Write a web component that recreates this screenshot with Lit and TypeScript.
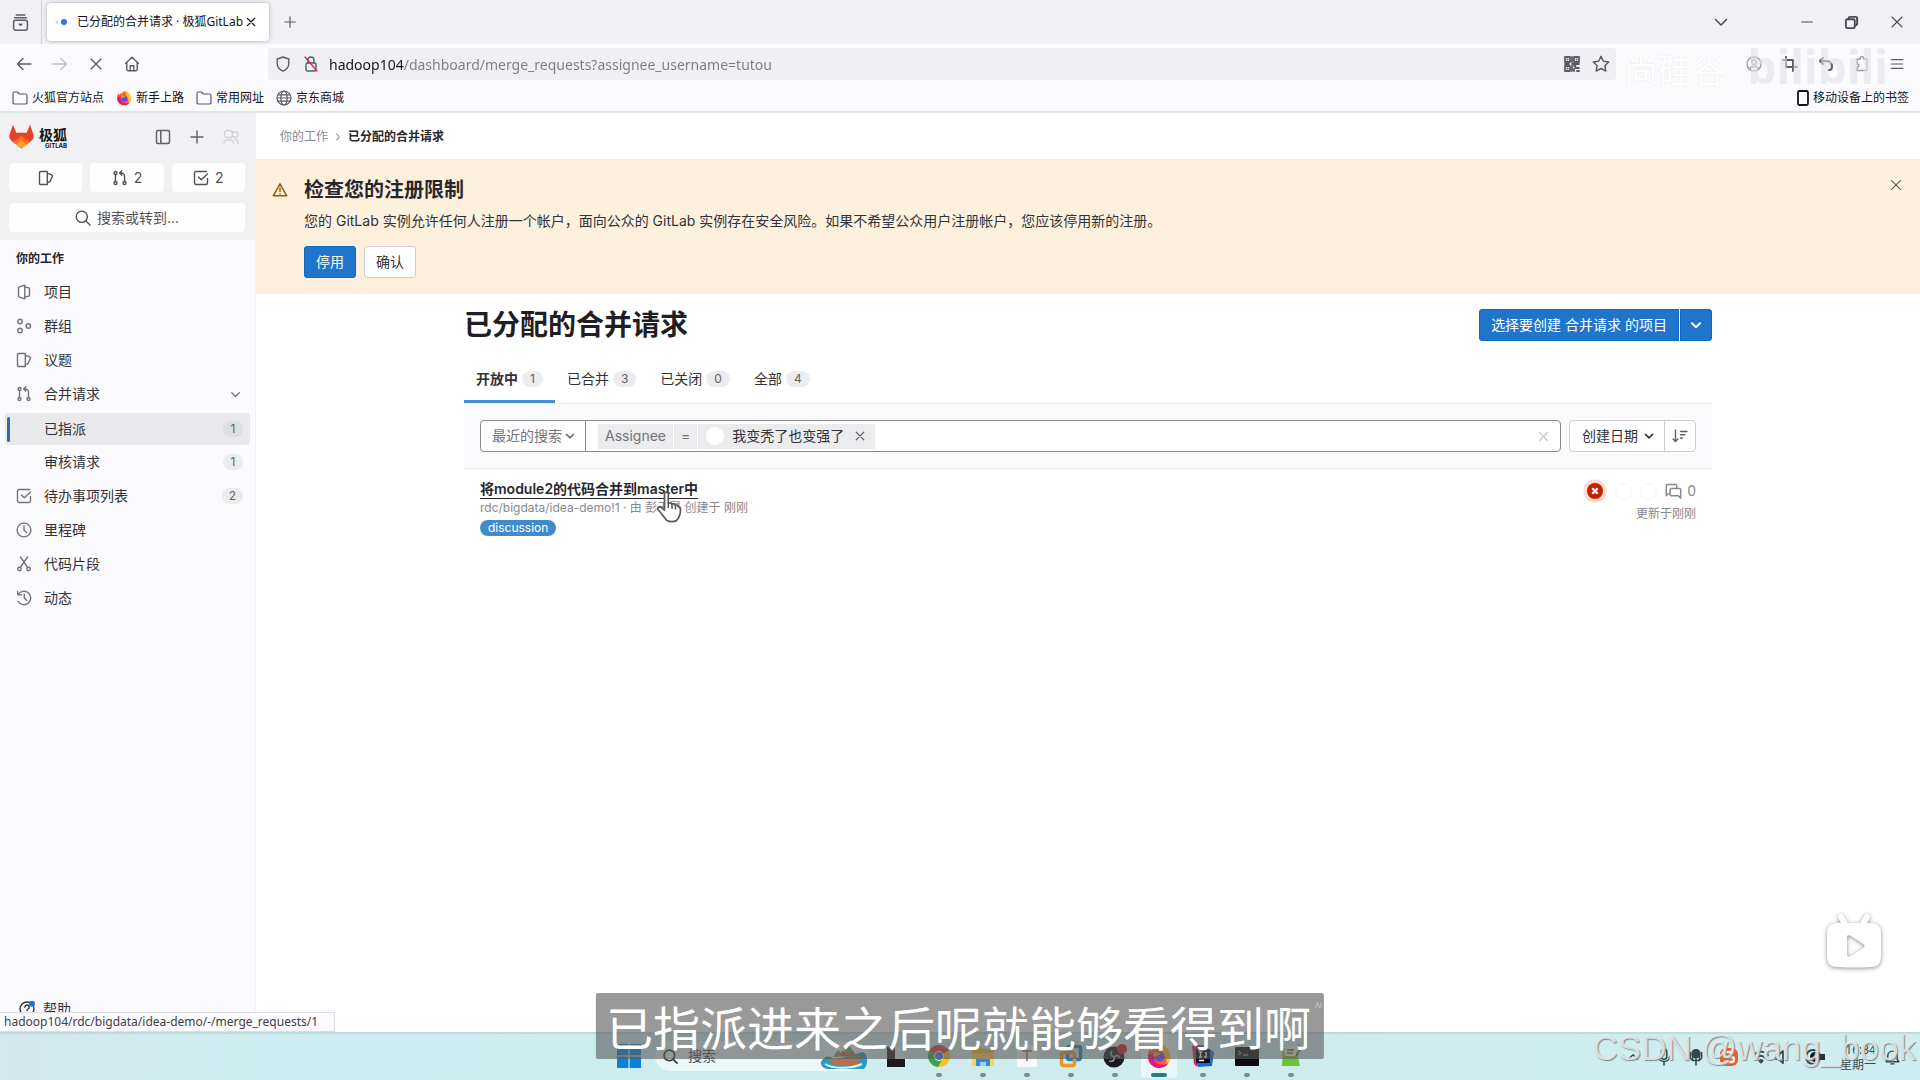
import { LitElement, html, svg, css, nothing } from "lit";
import { customElement } from "lit/decorators.js";
import { classMap } from "lit/directives/class-map.js";

const base = css`
  * { box-sizing: border-box; }
  :host { font-family: Inter, "Noto Sans CJK SC", sans-serif; font-size: 14px; line-height: 20px; color: #333238; }
  button, input, select { font: inherit; color: inherit; margin: 0; padding: 0; border: 0; background: none; outline: none; }
  button, a { display: inline-flex; align-items: center; justify-content: center; white-space: nowrap; }
  a { color: inherit; text-decoration: none; }
  ul { list-style: none; margin: 0; padding: 0; }
  h1, h2, p { margin: 0; }
  svg { display: block; flex: none; }
`;

const line = (body: unknown, size = 16, width = 1.4) => html`<svg width=${size} height=${size} viewBox="0 0 16 16" fill="none"
  stroke="currentColor" stroke-width=${width} stroke-linecap="round" stroke-linejoin="round" aria-hidden="true">${body}</svg>`;

const shapes = {
  close: svg`<path d="M3 3l10 10M13 3L3 13"/>`,
  plus: svg`<path d="M8 2v12M2 8h12"/>`,
  chevron: svg`<path d="M4 6.2l4 4 4-4"/>`,
  right: svg`<path d="M6 4l4 4-4 4"/>`,
  up: svg`<path d="M3.500 10.200L8 5.800l4.500 4.400"/>`,
  archive: svg`<path d="M4 1h8M2.500 3.500h11"/><rect x="1.500" y="5.800" width="13" height="9.400" rx="2"/><path d="M6.800 9.500L8 10.600l1.200-1.100"/>`,
  back: svg`<path d="M15 8H1.500M7 2.500L1.500 8 7 13.500"/>`,
  forward: svg`<path d="M1 8h13.500M9 2.500L14.500 8 9 13.500"/>`,
  home: svg`<path d="M1.500 7.500L8 1.200l6.500 6.300M2.800 6.500v7a1.300 1.300 0 0 0 1.300 1.300h7.800a1.300 1.300 0 0 0 1.300-1.300v-7M6.200 14.500V9.800h3.600v4.700"/>`,
  shield: svg`<path d="M8 1l5.800 2v4.500c0 3.600-2.400 6.200-5.800 7.700-3.400-1.500-5.800-4.100-5.800-7.700V3z"/>`,
  star: svg`<path d="M8 1.200l2.100 4.400 4.800.6-3.500 3.300.9 4.800L8 12l-4.300 2.300.9-4.800L1.100 6.200l4.800-.6z"/>`,
  menu: svg`<path d="M1.500 3h13M1.500 8h13M1.500 13h13"/>`,
  folder: svg`<path d="M1 12.500v-9A1.500 1.500 0 0 1 2.500 2h3L7.300 4h6.200A1.500 1.500 0 0 1 15 5.500v7a1.500 1.500 0 0 1-1.500 1.500h-11A1.500 1.500 0 0 1 1 12.500z"/>`,
  globe: svg`<circle cx="8" cy="8" r="7"/><ellipse cx="8" cy="8" rx="3.200" ry="7"/><path d="M1 8h14M2 4.800h12M2 11.200h12"/>`,
  phone: svg`<rect x="3" y="1" width="10" height="14" rx="1.500"/>`,
  account: svg`<circle cx="8" cy="8" r="7"/><circle cx="8" cy="6.200" r="2.300"/><path d="M4 12.500c1-3 7-3 8 0"/>`,
  crop: svg`<path d="M4 1v10h11M1 4h10v11"/>`,
  undo: svg`<path d="M5 2L2 5l3 3M2 5h6c4 0 6 2.500 6 5.500S12 14 11 14"/>`,
  puzzle: svg`<path d="M3 6V3h3.500a1.700 1.700 0 1 1 3 0H13v11.500H3V11c2.500.5 2.500-3.500 0-3z"/>`,
  panel: svg`<rect x="1.500" y="1.500" width="13" height="13" rx="1.500"/><path d="M5.800 1.500v13"/>`,
  issues: svg`<path d="M2.700 1.500h6.600v13H2.700a1.200 1.200 0 0 1-1.200-1.200V2.700a1.200 1.200 0 0 1 1.200-1.200zM9.300 3.200l4.400 1.600c.7.300 1 .9.700 1.600l-2.500 5.200-2.600 1.400"/>`,
  merge: svg`<circle cx="3.500" cy="3" r="1.500"/><circle cx="3.500" cy="13" r="1.500"/><circle cx="12.500" cy="13" r="1.500"/><path d="M3.500 4.500v7M12.500 11.500V6a3 3 0 0 0-3-3H8M9.800.8L7.600 3l2.200 2.200"/>`,
  todo: svg`<path d="M14.500 8.500v4.500a1.500 1.500 0 0 1-1.500 1.500H3A1.500 1.500 0 0 1 1.500 13V3A1.500 1.500 0 0 1 3 1.500h10.500M5.500 7l2.800 2.800L14.500 4"/>`,
  search: svg`<circle cx="6.800" cy="6.800" r="5.600"/><path d="M11 11l4 4"/>`,
  project: svg`<path d="M8.800 1.200v13.600l-5.600-1.600a1 1 0 0 1-.7-1V3.800a1 1 0 0 1 .7-1zM8.800 2.800l3.900 1.100a1 1 0 0 1 .8 1v6.200a1 1 0 0 1-.8 1l-3.900 1.100"/>`,
  group: svg`<circle cx="4" cy="3.500" r="2.200"/><circle cx="4" cy="12.500" r="2.200"/><circle cx="12.300" cy="8" r="2.200"/>`,
  clock: svg`<circle cx="8" cy="8" r="6.900"/><path d="M8 3.800V8l2.500 2.500"/>`,
  snippet: svg`<circle cx="3.500" cy="13" r="1.700"/><circle cx="12.500" cy="13" r="1.700"/><path d="M4.300 11.500L11.500 1M11.700 11.500L4.500 1"/>`,
  history: svg`<path d="M2 5a6.700 6.700 0 1 1 .2 6.300M1.500 1.500L2 5l3.500-.4M8.300 4.200V8l2.500 2.500"/>`,
  warning: svg`<path d="M8 1.800l6.700 12H1.300zM8 6.200v3.400M8 11.700v.2"/>`,
  sort: svg`<path d="M3.500 2v11.500M1 11l2.500 2.500L6 11M8.500 3.500h6.500M8.500 6.800h4.300M8.500 10h2"/>`,
  comments: svg`<path d="M4 10H3l-1.800 2V2.500A1.200 1.200 0 0 1 2.400 1.300h7.400A1.200 1.200 0 0 1 11 2.500V5M6 5.200h7.600a1.200 1.200 0 0 1 1.200 1.200v8L12.500 12H6a1.200 1.200 0 0 1-1.200-1.200V6.400A1.200 1.200 0 0 1 6 5.200z"/>`,
  qr: svg`<path d="M1 1h5v5H1zM10 1h5v5h-5zM1 10h5v5H1zM3.500 3.500h.1M12.500 3.500h.1M3.500 12.500h.1M8 1v5M8 8h7M1 8h4M10 10h1.500v2H15M10 15v-2M13 15h2M8 10v5"/>`,
  minimize: svg`<path d="M2 8h12"/>`,
  restore: svg`<rect x="2" y="4.500" width="9.500" height="9.500" rx="1.500"/><path d="M5 4.500V3.500A1.500 1.500 0 0 1 6.500 2h6A1.500 1.500 0 0 1 14 3.500v6a1.500 1.500 0 0 1-1.500 1.500h-1"/>`,
  faces: svg`<rect x="1.500" y="1.500" width="8" height="7" rx="2.500"/><path d="M1 14.500c.5-5 9-5 10 0M9.500 3h3.500c1.500 0 2 1 2 2.500S14 8 12.500 8h-3M12 10c1.500.5 3 2 3 4.500"/>`,
  lock: svg`<rect x="3" y="7" width="10" height="8" rx="1.500"/><path d="M5 7V4a3 3 0 0 1 6 0v3"/><path d="M2 1l12 14" stroke="#e22850"/>`,
  help: svg`<circle cx="8" cy="8" r="7"/><path d="M5.800 6.200a2.200 2.200 0 1 1 3.200 2c-.7.400-1 .7-1 1.400M8 11.700v.2"/><circle cx="13" cy="2.800" r="3" fill="#1f75cb" stroke="none"/>`,
  mic: svg`<rect x="5.500" y="1" width="5" height="9" rx="2.500"/><path d="M3 7.500c0 6 10 6 10 0M8 12v3"/>`,
  flower: svg`<circle cx="8" cy="5" r="3.500" fill="currentColor"/><path d="M3 4v5c1 3 9 3 10 0V4M8 9v6M5 6v5M11 6v5"/>`,
  wifi: svg`<path d="M1 6c4-4.500 10-4.500 14 0M3.500 9c3-3 6-3 9 0M6.300 11.800c1-1 2.400-1 3.400 0L8 13.500z"/>`,
  speaker: svg`<path d="M2 6h2.500L9 2v12L4.500 10H2zM12 5.500c1.500 1.500 1.500 3.500 0 5"/>`,
  bell: svg`<path d="M2 12h12l-1.500-2V6.500a4.500 4.500 0 0 0-9 0V10zM6.500 14h3"/>`,
};

const firefox = (s: number) => html`<svg width=${s} height=${s} viewBox="0 0 24 24" aria-hidden="true">
  <path d="M12 2c5.500 0 10 4.500 10 11 0 5.500-4.500 10-10 10S1.500 18.500 1.500 12.500c0-3 1-5.500 2.500-7.500l1 2.500C6 5.500 8 5 9 5z" fill="#ff5a35"/>
  <path d="M14 .5c4.500 2.500 8.500 7 8.500 12.500 0 4-2 7.500-5.500 9 2-3 2.500-6 1-9-1-2-4-5-4-12.500z" fill="#ffc12e"/>
  <path d="M2 11c0 8 5 12 10.500 12 4 0 7-2 8-5-3 3-9 3-12-1C6.500 14 8 11 10 10c-3-1-6 0-8 1z" fill="#e31587"/>
  <circle cx="12.500" cy="13" r="4.300" fill="#7542e5"/><path d="M7 9c3-1.500 5 .5 7 .5-1 2-3 1.500-4 2.500-.5 1-2 1-3-.5z" fill="#ff9a29"/></svg>`;

@customElement("browser-chrome")
class BrowserChrome extends LitElement {
  static styles = [base, css`
    :host { display: block; position: relative; font-family: "Noto Sans", "Noto Sans CJK SC", sans-serif; font-size: 12px; color: #15141a; background: #fbfbfe; border-bottom: 2px solid #e4e4e8; }
    .tabs { display: flex; align-items: center; height: 44px; background: #f0f0f5; }
    .archive { width: 42px; height: 44px; border-right: 1px solid #d0d0d6; color: #5b5b66; }
    .tab { display: flex; align-items: center; width: 222px; height: 38px; margin-left: 5px; padding: 0 12px 0 8px; background: #fff; border-radius: 4px; box-shadow: 0 0 4px #a9a9b4; }
    .load { width: 22px; color: #3584e4; }
    .name { flex: 1; white-space: nowrap; }
    .new { margin-left: 14px; color: #5b5b66; }
    .window { display: flex; align-items: center; gap: 30px; margin-left: auto; margin-right: 15px; color: #4a4a55; }
    .window .list { margin-right: 38px; }
    .bar { display: flex; align-items: center; height: 40px; padding: 0 16px; color: #5b5b66; }
    .nav { display: flex; gap: 20px; width: 252px; }
    .nav .off { color: #bcbcc4; }
    .url { display: flex; flex: 1; align-items: center; height: 32px; gap: 12px; padding: 0 6px 0 7px; background: #f0f0f4; border-radius: 4px; }
    .url input { flex: 1; min-width: 0; height: 32px; margin-left: -2px; font-size: 14px; color: #55555f; -webkit-text-fill-color: transparent; background: linear-gradient(90deg, #15141a 75px, #7b7b84 75px); -webkit-background-clip: text; background-clip: text; }
    .tools { display: flex; gap: 20px; width: 168px; margin-left: 120px; justify-content: flex-end; }
    .tools .faint { opacity: 0.6; }
    .marks { display: flex; align-items: center; height: 27px; padding: 0 11px 0 12px; }
    .marks a { gap: 4px; margin-right: 12px; }
    .marks a svg { color: #5b5b66; }
    .marks a:last-child { margin: 0 0 0 auto; gap: 2px; }
    .marks a:last-child svg { color: #15141a; }
    .owner { position: absolute; right: 194px; top: 46px; font-size: 34px; line-height: 48px; color: #fff; text-shadow: 0 0 2px #e4e4ea; pointer-events: none; }
    .site { position: absolute; right: 32px; top: 36px; font-size: 46px; line-height: 60px; font-weight: 700; color: #e3e3e8; opacity: 0.6; pointer-events: none; }
  `];
  render() {
    return html`
      <div class="tabs">
        <button class="archive" aria-label="Firefox View">${line(shapes.archive, 17, 1.4)}</button>
        <div class="tab">
          <svg class="load" width="22" height="8" viewBox="0 0 22 8"><circle cx="2" cy="4" r="1.500" fill="#b9d5f7"/><circle cx="9" cy="4" r="3" fill="#3273dc"/></svg>
          <span class="name">已分配的合并请求 · 极狐GitLab</span>
          <button aria-label="关闭标签页">${line(shapes.close, 12, 1.5)}</button>
        </div>
        <button class="new" aria-label="新建标签页">${line(shapes.plus, 14)}</button>
        <div class="window">
          <button class="list" aria-label="列出标签页">${line(shapes.chevron, 22, 1.1)}</button>
          <button aria-label="最小化">${line(shapes.minimize, 14)}</button>
          <button aria-label="还原">${line(shapes.restore, 15, 2)}</button>
          <button aria-label="关闭">${line(shapes.close, 16, 1.1)}</button>
        </div>
      </div>
      <div class="bar">
        <div class="nav">
          <button aria-label="后退">${line(shapes.back)}</button>
          <button class="off" aria-label="前进">${line(shapes.forward)}</button>
          <button aria-label="停止">${line(shapes.close)}</button>
          <button aria-label="主页">${line(shapes.home)}</button>
        </div>
        <div class="url">
          ${line(shapes.shield)}${line(shapes.lock)}
          <input type="text" aria-label="地址" .value=${"hadoop104/dashboard/merge_requests?assignee_username=tutou"}>
          <button aria-label="二维码">${line(shapes.qr, 16, 1.8)}</button>
          <button aria-label="收藏">${line(shapes.star, 18, 1.3)}</button>
        </div>
        <div class="tools">
          <button class="faint" aria-label="账户">${line(shapes.account)}</button>
          <button aria-label="截图">${line(shapes.crop, 16, 2)}</button>
          <button aria-label="撤销">${line(shapes.undo, 16, 2)}</button>
          <button class="faint" aria-label="扩展">${line(shapes.puzzle)}</button>
          <button aria-label="菜单">${line(shapes.menu, 14)}</button>
        </div>
      </div>
      <div class="marks">
        <a href="#">${line(shapes.folder, 16, 1.2)}火狐官方站点</a>
        <a href="#">${firefox(16)}新手上路</a>
        <a href="#">${line(shapes.folder, 16, 1.2)}常用网址</a>
        <a href="#">${line(shapes.globe, 16, 1.2)}京东商城</a>
        <a href="#">${line(shapes.phone, 16, 1.8)}移动设备上的书签</a>
      </div>
      <span class="owner">尚硅谷</span>
      <span class="site">bilibili</span>`;
  }
}

type Item = { icon?: keyof typeof shapes; text: string; count?: number; active?: boolean; open?: boolean };
const items: Item[] = [
  { icon: "project", text: "项目" },
  { icon: "group", text: "群组" },
  { icon: "issues", text: "议题" },
  { icon: "merge", text: "合并请求", open: true },
  { text: "已指派", count: 1, active: true },
  { text: "审核请求", count: 1 },
  { icon: "todo", text: "待办事项列表", count: 2 },
  { icon: "clock", text: "里程碑" },
  { icon: "snippet", text: "代码片段" },
  { icon: "history", text: "动态" },
];

@customElement("side-bar")
class SideBar extends LitElement {
  static styles = [base, css`
    :host { display: flex; flex-direction: column; background: #fbfafd; border-right: 1px solid #f1f0f5; }
    .top { padding: 0 10px 8px 9px; background: #f1f1f4; }
    .brand { display: flex; align-items: center; height: 50px; padding-bottom: 3px; gap: 18px; color: #626168; }
    .logo { display: flex; gap: 5px; margin-right: auto; color: #111; }
    .logo strong { display: flex; flex-direction: column; align-items: flex-end; font-size: 14px; line-height: 14px; padding-top: 4px; }
    .logo small { font-size: 6px; line-height: 7px; }
    .brand .dim { color: #d3d3d8; margin-right: 6px; }
    .counts { display: grid; grid-template-columns: repeat(3, 1fr); gap: 8px; margin-bottom: 11px; }
    .counts button, .find { height: 29px; gap: 6px; background: #fefefe; border-radius: 4px; color: #535158; }
    .find { width: 100%; }
    nav { padding: 9px 5px; }
    h2 { padding: 0 11px; margin-bottom: 6px; font-size: 12px; font-weight: 700; color: #28272d; }
    .item { display: flex; height: 34px; padding: 0 7px 0 11px; justify-content: flex-start; border-radius: 4px; }
    .item > svg { color: #737278; }
    .glyph { width: 28px; color: #737278; }
    .label { flex: 1; }
    .count { min-width: 20px; padding: 0 7px; font-size: 12px; line-height: 16px; text-align: center; background: #ececef; border-radius: 8px; color: #626168; }
    .active { height: 32px; margin: 2px 0 0; padding-left: 2px; background: #e9e9ec; }
    .active::before { content: ""; width: 3px; height: 25px; margin-right: 6px; background: #2f6cb0; border-radius: 2px; }
    .active .count { background: #dddde2; }
    .help { height: 32px; gap: 8px; margin: auto auto 7px 19px; }
  `];
  render() {
    return html`
      <div class="top">
        <div class="brand">
          <a class="logo" href="#" aria-label="极狐GitLab">
            <svg width="25" height="25" viewBox="0 0 25 25"><path d="M4 .5L.6 10.500c-.7 3 .2 5 2.400 6.800l9.500 7.200 9.500-7.200c2.200-1.800 3.100-3.800 2.400-6.800L21 .5l-3.300 8.300H7.300z" fill="#e24329"/><path d="M12.500 24.500L3 17.300c5-1 8-4 9.500-6 1.500 2 4.500 5 9.500 6z" fill="#fc6d26"/><path d="M12.500 24.500l-5.300-4c2.400-1.500 4-3 5.300-4.500 1.300 1.500 2.900 3 5.300 4.500z" fill="#fca326"/></svg>
            <strong>极狐<small>GITLAB</small></strong>
          </a>
          <button aria-label="折叠侧边栏">${line(shapes.panel, 16, 1.5)}</button>
          <button aria-label="新建">${line(shapes.plus, 16)}</button>
          <button class="dim" aria-label="用户">${line(shapes.faces, 16)}</button>
        </div>
        <div class="counts">
          <button aria-label="议题">${line(shapes.issues)}</button>
          <button>${line(shapes.merge)}2</button>
          <button>${line(shapes.todo)}2</button>
        </div>
        <button class="find">${line(shapes.search)}搜索或转到...</button>
      </div>
      <nav>
        <h2>你的工作</h2>
        <ul>${items.map((i) => html`<li><a href="#" class=${classMap({ item: true, active: !!i.active })}>
          <span class="glyph">${i.icon ? line(shapes[i.icon]) : nothing}</span><span class="label">${i.text}</span>
          ${i.open ? line(shapes.chevron, 15) : nothing}${i.count ? html`<span class="count">${i.count}</span>` : nothing}
        </a></li>`)}</ul>
      </nav>
      <button class="help">${line(shapes.help)}帮助</button>`;
  }
}

const tabs = [["开放中", 1], ["已合并", 3], ["已关闭", 0], ["全部", 4]] as const;

@customElement("merge-requests")
class MergeRequests extends LitElement {
  static styles = [base, css`
    :host { display: block; background: #fff; }
    .crumbs { display: flex; align-items: center; height: 47px; gap: 4px; padding: 1px 24px 0; font-size: 12px; color: #89888d; border-bottom: 1px solid #ecebdf; }
    .crumbs strong { color: #28272d; font-weight: 600; }
    .alert { display: flex; align-items: flex-start; padding: 16px; gap: 16px; background: #fdf1dd; }
    .alert > svg { color: #9e5400; margin-top: 6px; }
    .body { flex: 1; }
    .body h2 { font-size: 20px; line-height: 28px; font-weight: 700; margin-bottom: 7px; color: #28272d; }
    .body p { margin-bottom: 15px; }
    .actions { display: flex; gap: 8px; }
    .btn { height: 32px; padding: 0 12px; border-radius: 4px; background: #fff; box-shadow: inset 0 0 0 1px #cfcdd2; }
    .primary { background: #1f75cb; color: #fff; box-shadow: inset 0 0 0 1px #1068bf; }
    .alert .x { margin: 2px 1px 0 0; color: #626168; }
    .wrap { max-width: 1280px; margin: 0 auto; padding: 15px 16px; }
    .head { display: flex; justify-content: space-between; align-items: center; margin-bottom: 16px; }
    h1 { font-size: 28px; line-height: 32px; font-weight: 700; color: #1f1e24; }
    .split { display: flex; gap: 1px; }
    .split .btn:first-child { border-radius: 4px 0 0 4px; }
    .split .btn:last-child { border-radius: 0 4px 4px 0; padding: 0 8px; }
    .tabs { display: flex; border-bottom: 1px solid #ececef; }
    .tabs a { height: 46px; padding: 0 12px 2px; gap: 4px; }
    .tabs .on { font-weight: 700; border-bottom: 3px solid #428fdc; padding-bottom: 0; }
    .tabs span { padding: 0 8px; font-size: 12px; line-height: 16px; font-weight: 400; background: #ececef; border-radius: 8px; color: #626168; }
    .filter { display: flex; gap: 8px; padding: 16px; background: #fbfafd; border-bottom: 1px solid #ececef; }
    .search { display: flex; flex: 1; align-items: center; height: 32px; border: 1px solid #89888d; border-radius: 4px; background: #fff; }
    .pick { display: grid; align-items: center; height: 30px; }
    .pick select { grid-area: 1 / 1; height: 30px; appearance: none; padding: 0 26px 0 12px; }
    .pick svg { grid-area: 1 / 1; justify-self: end; margin-right: 8px; pointer-events: none; }
    .recent { color: #737278; border-right: 1px solid #89888d; margin-right: 12px; }
    .recent select { padding: 0 23px 0 11px; }
    .token { display: flex; align-items: center; height: 25px; padding: 0 7px; margin-right: 1px; background: #ececef; color: #737278; }
    .who { gap: 8px; padding: 0 9px 0 8px; color: #333238; }
    .who i { width: 18px; height: 18px; border-radius: 50%; background: #fff; }
    .who button { margin-left: 2px; color: #626168; }
    .search input { flex: 1; min-width: 0; height: 30px; }
    .clear { margin-right: 10px; color: #bfbfc3; }
    .sort { display: flex; border: 1px solid #cfcdd2; border-radius: 4px; background: #fff; }
    .sort .dir { width: 31px; border-left: 1px solid #cfcdd2; color: #626168; }
    .mr { display: flex; justify-content: space-between; padding: 10px 16px; }
    .title { display: inline-flex; font-weight: 600; color: #28272d; text-decoration: underline; text-underline-offset: 4px; }
    .meta { font-size: 12px; line-height: 18px; color: #89888d; }
    .label { margin-top: 3px; padding: 0 8px; height: 16px; font-size: 12px; line-height: 16px; color: #fff; background: #428bca; border-radius: 8px; }
    .state { display: flex; flex-direction: column; align-items: flex-end; gap: 2px; font-size: 12px; line-height: 18px; color: #89888d; }
    .icons { display: flex; align-items: center; gap: 8px; font-size: 14px; height: 24px; }
    .icons i { width: 17px; height: 17px; border: 1px solid #f6f6f8; border-radius: 50%; }
    .talk { display: flex; align-items: center; gap: 5px; }
  `];
  render() {
    return html`
      <div class="crumbs"><a href="#">你的工作</a>${line(shapes.right, 12)}<strong>已分配的合并请求</strong></div>
      <section class="alert">
        ${line(shapes.warning, 16, 1.5)}
        <div class="body">
          <h2>检查您的注册限制</h2>
          <p>您的 GitLab 实例允许任何人注册一个帐户，面向公众的 GitLab 实例存在安全风险。如果不希望公众用户注册帐户，您应该停用新的注册。</p>
          <div class="actions"><button class="btn primary">停用</button><button class="btn">确认</button></div>
        </div>
        <button class="x" aria-label="关闭">${line(shapes.close, 14)}</button>
      </section>
      <div class="wrap">
        <div class="head">
          <h1>已分配的合并请求</h1>
          <div class="split"><button class="btn primary">选择要创建 合并请求 的项目</button><button class="btn primary" aria-label="更多">${line(shapes.chevron, 16, 2)}</button></div>
        </div>
        <nav class="tabs">${tabs.map(([t, n], i) => html`<a href="#" class=${classMap({ on: i === 0 })}>${t}<span>${n}</span></a>`)}</nav>
        <div class="filter">
          <div class="search">
            <div class="pick recent"><select aria-label="最近的搜索"><option>最近的搜索</option></select>${line(shapes.chevron, 14, 1.8)}</div>
            <span class="token">Assignee</span><span class="token">=</span>
            <span class="token who"><i></i>我变秃了也变强了<button aria-label="移除">${line(shapes.close, 12, 1.6)}</button></span>
            <input type="text" aria-label="搜索">
            <button class="clear" aria-label="清除">${line(shapes.close, 13)}</button>
          </div>
          <div class="sort">
            <div class="pick"><select aria-label="排序"><option>创建日期</option></select>${line(shapes.chevron, 14, 1.8)}</div>
            <button class="dir" aria-label="排序方向">${line(shapes.sort)}</button>
          </div>
        </div>
        <article class="mr">
          <div>
            <a class="title" href="#">将module2的代码合并到master中</a>
            <div class="meta">rdc/bigdata/idea-demo!1 · 由 彭于晏 创建于 刚刚</div>
            <a class="label" href="#">discussion</a>
          </div>
          <div class="state">
            <div class="icons">
              <svg width="24" height="24" viewBox="0 0 24 24" role="img" aria-label="流水线失败"><circle cx="12" cy="12" r="11.500" fill="#fddcd4"/><circle cx="12" cy="12" r="8" fill="#c91c00"/><path d="M9.300 9.300l5.400 5.400M14.700 9.300l-5.400 5.400" stroke="#fff" stroke-width="2.300"/></svg>
              <i></i><i></i><span class="talk">${line(shapes.comments, 17)}0</span>
            </div>
            <span>更新于刚刚</span>
          </div>
        </article>
      </div>`;
  }
}

const apps = [
  svg`<path d="M4 3h8v12h10v8H4z" fill="#1b1b1b"/><path d="M12 3h9v12h-9z" fill="#e8f2f2"/>`,
  svg`<circle cx="12" cy="12" r="11" fill="#fbc116"/><path d="M12 12L2.500 6.500A11 11 0 0 1 21.500 6.500z" fill="#e33b2e"/><path d="M12 12L2.500 6.500A11 11 0 0 0 11 23l5-9z" fill="#2da94f"/><circle cx="12" cy="12" r="5" fill="#fff"/><circle cx="12" cy="12" r="4" fill="#3d7ee8"/>`,
  svg`<path d="M1 4a2 2 0 0 1 2-2h6l3 3h9a2 2 0 0 1 2 2v14H1z" fill="#f5b62e"/><path d="M1 9h22v13H1z" fill="#fdd25b"/><path d="M5 15h14v7H5z" fill="#2a8be0"/><path d="M9 18h6v4H9z" fill="#9fd2f7"/>`,
  svg`<rect x="2" y="1" width="20" height="22" rx="1" fill="#f8fafa"/><path d="M7 7h10M12 7v10" stroke="#777" stroke-width="1.600" fill="none"/>`,
  svg`<rect x="8.500" y="2.500" width="13" height="13" rx="2" fill="none" stroke="#1688c4" stroke-width="3.500"/><rect x="2.500" y="8.500" width="13" height="13" rx="2" fill="none" stroke="#f0951c" stroke-width="3.500"/>`,
  svg`<circle cx="11" cy="13" r="10.500" fill="#17191c"/><path d="M11 13c-3-1-4-3-2-6M11 13c2-2 5-2 6 1M11 13c1 3-1 5-5 4" stroke="#8d9394" stroke-width="1.800" fill="none"/><circle cx="19" cy="5" r="5" fill="#e01118"/>`,
  null,
  svg`<path d="M1 2l11-1 11 7-2 14-14 1z" fill="#1767d8"/><path d="M1 2l9-1-4 22-3-3z" fill="#e0245e"/><rect x="5" y="5" width="14" height="14" fill="#07070f"/><path d="M8 8h3M9.500 8v5M8 13h3M15 8v5h-2M8 16.500h5" stroke="#fff" stroke-width="1.400" fill="none"/>`,
  svg`<rect x="0" y="3" width="24" height="19" rx="1" fill="#0b0b0b"/><path d="M3 7l3 2-3 2M8 11h5" stroke="#8c8c8c" stroke-width="1.300" fill="none"/>`,
  svg`<path d="M4 4h13l4 18H3z" fill="#6cc433"/><path d="M5 3h13l-1 9H6z" fill="#eef3df"/><path d="M8 6h7M8 9h6M19 1l3 3-5 8" stroke="#55603f" stroke-width="1.600" fill="none"/>`,
];

@customElement("task-bar")
class TaskBar extends LitElement {
  static styles = [base, css`
    :host { display: grid; grid-template-columns: 1fr auto 1fr; align-items: center; height: 48px; border-top: 2px solid #c1dadb; background: linear-gradient(90deg, #d3e9ec, #cceef0 15%, #cfebed 50%, #cdeef0); font-family: "Noto Sans", "Noto Sans CJK SC", sans-serif; font-size: 12px; line-height: 16px; color: #30393a; }
    .dock { grid-column: 2; display: flex; align-items: center; height: 46px; padding-bottom: 2px; }
    .app { position: relative; width: 44px; height: 44px; }
    .app.run::after { content: ""; position: absolute; bottom: 1px; width: 6px; height: 4px; border-radius: 2px; background: #7f8c8d; }
    .app.now { width: 36px; margin: 0 4px; background: #e9f7f8; border-radius: 4px; }
    .app.now::after { width: 16px; background: #237b87; }
    .find { display: flex; align-items: center; width: 214px; height: 30px; margin: 0 4px 0 4px; padding-left: 8px; gap: 10px; background: #ebf6f7; border-radius: 15px; font-size: 14px; }
    .find input { flex: 1; min-width: 0; }
    .find input::placeholder { color: #454f50; opacity: 1; }
    .tray { display: flex; align-items: center; justify-content: flex-end; gap: 14px; padding-right: 19px; color: #35494b; }
    .sys { display: flex; gap: 5px; }
    .now-time { display: flex; align-items: center; gap: 8px; }
    .time { text-align: right; line-height: 15px; }
  `];
  render() {
    return html`
      <div class="dock">
        <button class="app" aria-label="开始"><svg width="24" height="24" viewBox="0 0 24 24"><path d="M0 0h11.400v11.400H0zM12.600 0H24v11.400H12.600zM0 12.600h11.400V24H0zM12.600 12.600H24V24H12.600z" fill="#0c7fd8"/></svg></button>
        <label class="find">${line(shapes.search, 15, 1.8)}<input type="search" aria-label="搜索" placeholder="搜索">
          <svg width="50" height="28" viewBox="0 0 50 28"><path d="M2 20c4-8 10-6 14-2l28-8c5 2 6 12 1 17H8c-4-1-7-4-6-7z" fill="#2d9ac0"/><path d="M9 17l34-3-5 9H16z" fill="#b5714b"/><path d="M14 15l5-7 5 5 5-11 8 11 4 1z" fill="#55aa7f"/><path d="M20 14l4-6 5 5 4-4 4 5z" fill="#e5533f"/><path d="M6 22c8 5 26 5 37 0" stroke="#d8f3f8" stroke-width="2" fill="none"/></svg>
        </label>
        ${apps.map((a, i) => html`<button class=${classMap({ app: true, run: i > 0, now: a === null })} aria-label="应用 ${i + 1}">
          ${a === null ? firefox(26) : html`<svg width="24" height="24" viewBox="0 0 24 24">${a}</svg>`}</button>`)}
      </div>
      <div class="tray">
        ${line(shapes.up)}${line(shapes.mic, 18)}${line(shapes.flower, 18)}
        <svg width="20" height="20" viewBox="0 0 20 20"><rect x="1" y="1" width="18" height="18" rx="6" fill="#f15a29"/><path d="M14.500 5H7.500a2.500 2.500 0 0 0 0 5h5a2.500 2.500 0 0 1 0 5H5" stroke="#fff" stroke-width="2.300" fill="none"/></svg>
        <div class="sys">${line(shapes.wifi, 16, 1.8)}${line(shapes.speaker, 16, 1.8)}</div>
        <svg width="22" height="18" viewBox="0 0 22 18"><circle cx="9" cy="9" r="7" fill="none" stroke="#2f4142" stroke-width="2"/><circle cx="11" cy="9" r="5" fill="#050808"/><path d="M15 6h6v6h-6z" fill="#273335"/></svg>
        <div class="now-time"><div class="time">16:34<br>星期一</div>${line(shapes.bell, 17)}</div>
      </div>`;
  }
}

@customElement("app-root")
class AppRoot extends LitElement {
  static styles = [base, css`
    :host { position: relative; display: flex; flex-direction: column; min-height: 100vh; overflow: hidden; background: #fff; }
    .page { position: relative; display: grid; grid-template-columns: 256px 1fr; flex: 1; }
    .status { position: absolute; left: 0; bottom: 0; padding: 0 16px 0 4px; height: 20px; font-family: "Noto Sans", sans-serif; font-size: 12px; line-height: 18px; background: #fbfbfd; border: 1px solid #dedee3; border-left: 0; color: #3e3e46; }
    .pointer { position: absolute; left: 656px; top: 377px; }
    .tv { position: absolute; right: 34px; bottom: 59px; filter: drop-shadow(0 1px 2px #8c8c8c); }
    .caption { position: absolute; left: 50%; bottom: 21px; transform: translateX(-50%); display: flex; height: 66px; padding: 0 2px 0 10px; gap: 4px; background: rgba(90, 90, 90, 0.62); color: #fff; font-family: "Noto Sans CJK SC", sans-serif; font-size: 47px; line-height: 66px; white-space: nowrap; border-radius: 2px; }
    .caption small { font-size: 8px; line-height: 12px; padding-top: 6px; color: #c9c9c9; }
    .mark { position: absolute; right: 4px; bottom: 8px; font-family: "Liberation Sans", sans-serif; font-size: 35px; line-height: 48px; color: rgba(232, 236, 236, 0.85); text-shadow: 1px 1px 1px #7f8a8b; white-space: nowrap; pointer-events: none; }
  `];
  render() {
    return html`
      <browser-chrome></browser-chrome>
      <div class="page">
        <side-bar></side-bar>
        <merge-requests></merge-requests>
        <div class="status">hadoop104/rdc/bigdata/idea-demo/-/merge_requests/1</div>
        <svg class="pointer" width="28" height="34" viewBox="0 0 28 34"><path d="M9 2.500c2-.8 3.300.3 3.300 2v9c1-1 3-.8 3.500.8 1.200-1 3-.6 3.400 1 1.300-.7 3-.2 3.300 1.500 1.300.3 2 1.200 2 2.700 0 6-1.500 8.500-4 11-2 1.500-7 1.500-9.500 0C8 28 5.500 23 2 19.500c-1-1.500 1-3.500 3.500-2l3 2.500v-16z" fill="#fff" stroke="#55555c" stroke-width="1.700" stroke-linejoin="round"/><path d="M12.300 13v5M16 14v5M19.500 15.500v4" stroke="#55555c" stroke-width="1.500"/></svg>
        <svg class="tv" width="64" height="60" viewBox="0 0 64 60"><path d="M19 4l5 9M45 4l-5 9" stroke="#fff" stroke-width="6" stroke-linecap="round"/><path fill-rule="evenodd" d="M15 10h34q10 0 10 10v24q0 10-10 10-17 1-34 0Q5 54 5 44V20q0-10 10-10zM25 24v17q0 4 4 2l12-8q3-2 0-4l-12-8q-4-2-4 1z" fill="#fff"/></svg>
      </div>
      <task-bar></task-bar>
      <div class="caption">已指派进来之后呢就能够看得到啊<small>AI</small></div>
      <div class="mark">CSDN @wang_book</div>`;
  }
}
